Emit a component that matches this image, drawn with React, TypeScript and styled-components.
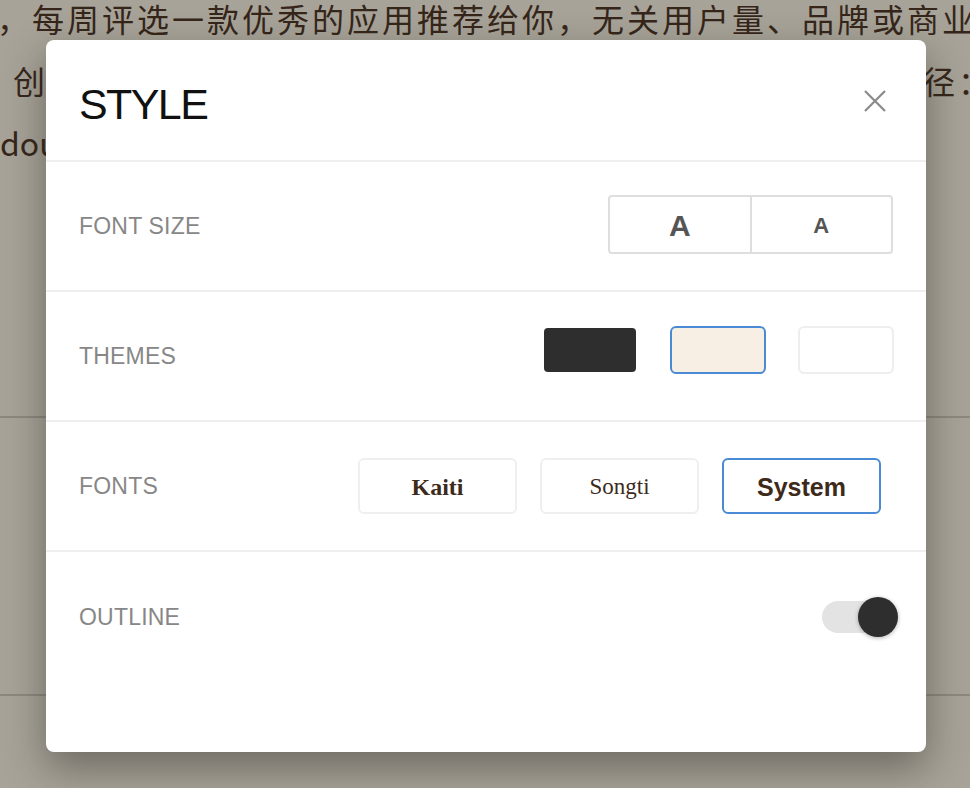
import React, { useState } from "react";
import styled, { createGlobalStyle } from "styled-components";

const GlobalStyle = createGlobalStyle`
    html, body {
        margin: 0;
        padding: 0;
    }
    body {
        font-family: "Liberation Sans", Arial, sans-serif;
    }
`;

const Page = styled.div`
    position: relative;
    height: 788px;
    overflow: hidden;
    background: #a7a398;
`;

const Article = styled.div`
    margin-top: -13px;
    font-family: "Noto Sans CJK SC", "Liberation Sans", sans-serif;
    font-size: 32px;
    letter-spacing: 3px;
    line-height: 62px;
    color: #36261a;
    white-space: nowrap;
`;

const Line = styled.div<{ $shift: number }>`
    margin-left: ${p => p.$shift}px;
`;

const Latin = styled.span`
    letter-spacing: 0;
`;

const Rule = styled.div<{ $gap: number }>`
    margin-top: ${p => p.$gap}px;
    height: 2px;
    background: #8d897f;
`;

const Dialog = styled.div`
    position: absolute;
    top: 40px;
    left: 46px;
    width: 880px;
    height: 712px;
    background: #fff;
    border-radius: 8px;
    box-shadow: 0 16px 40px rgba(40, 36, 30, 0.45);
    overflow: hidden;
`;

const Header = styled.div`
    height: 122px;
    box-sizing: border-box;
    padding: 8px 33px 0 33px;
    display: flex;
    align-items: center;
    justify-content: space-between;
    border-bottom: 2px solid #efefef;
`;

const Title = styled.h1`
    margin: 0;
    font-size: 43px;
    font-weight: 400;
    letter-spacing: -1.6px;
    color: #111;
`;

const Close = styled.button`
    border: 0;
    background: none;
    padding: 0;
    margin-right: 6px;
    margin-top: -6px;
    width: 24px;
    height: 24px;
    display: flex;
    cursor: pointer;
`;

const Row = styled.div<{ $padRight: number; $last?: boolean }>`
    height: 130px;
    box-sizing: border-box;
    padding: 0 ${p => p.$padRight}px 0 33px;
    display: flex;
    align-items: center;
    justify-content: space-between;
    border-bottom: ${p => (p.$last ? "none" : "2px solid #efefef")};
`;

const Label = styled.span`
    font-size: 23px;
    letter-spacing: 0.2px;
    color: #878787;
`;

const Segmented = styled.div`
    display: flex;
    width: 285px;
    height: 59px;
    box-sizing: border-box;
    border: 2px solid #dedede;
    border-radius: 4px;
    margin-top: -3px;
`;

const SegItem = styled.button<{ $size: number }>`
    flex: 1;
    border: 0;
    background: none;
    font-family: "Liberation Sans", Arial, sans-serif;
    font-weight: 700;
    font-size: ${p => p.$size}px;
    color: #555;
    padding-top: 3px;
    cursor: pointer;
    & + & {
        border-left: 2px solid #dedede;
    }
`;

const Swatches = styled.div`
    display: flex;
    gap: 32px;
    margin-bottom: 12px;
`;

const Swatch = styled.button<{ $bg: string; $border: string }>`
    width: 96px;
    height: 48px;
    box-sizing: border-box;
    border: 2px solid ${p => p.$border};
    border-radius: 6px;
    background: ${p => p.$bg};
    background-clip: padding-box;
    cursor: pointer;
`;

const FontChoices = styled.div`
    display: flex;
    gap: 23px;
`;

const FontButton = styled.button<{ $family: string; $weight: number; $size: number; $selected?: boolean }>`
    width: 159px;
    height: 56px;
    box-sizing: border-box;
    border: 2px solid ${p => (p.$selected ? "#4a8ad4" : "#efefef")};
    border-radius: 6px;
    background: #fff;
    font-family: ${p => p.$family};
    font-weight: ${p => p.$weight};
    font-size: ${p => p.$size}px;
    color: #3d2a1b;
    padding-top: 3px;
    cursor: pointer;
`;

const Toggle = styled.button`
    position: relative;
    width: 76px;
    height: 40px;
    border: 0;
    padding: 0;
    background: none;
    cursor: pointer;
`;

const Track = styled.span`
    position: absolute;
    left: 0;
    top: 4px;
    width: 60px;
    height: 32px;
    border-radius: 16px;
    background: #e3e3e3;
`;

const Knob = styled.span<{ $on: boolean }>`
    position: absolute;
    top: 0;
    left: ${p => (p.$on ? 36 : 0)}px;
    width: 40px;
    height: 40px;
    border-radius: 50%;
    background: #2e2e2e;
    box-shadow: 0 1px 4px rgba(0, 0, 0, 0.3);
`;

const themes = [
    { key: "dark", bg: "#2e2e2e", border: "transparent" },
    { key: "sepia", bg: "#f7efe4", border: "#4a8ad4" },
    { key: "light", bg: "#fff", border: "#eeeeee" },
];

const fonts = [
    { key: "Kaiti", family: '"Liberation Serif", serif', weight: 700, size: 24 },
    { key: "Songti", family: '"Liberation Serif", serif', weight: 400, size: 23 },
    { key: "System", family: '"Liberation Sans", Arial, sans-serif', weight: 700, size: 25 },
];

export default function App() {
    const [font, setFont] = useState("System");
    const [outline, setOutline] = useState(true);

    return (
        <Page>
            <GlobalStyle />
            <Article>
                <Line $shift={-3}>，每周评选一款优秀的应用推荐给你，无关用户量、品牌或商业</Line>
                <Line $shift={-22}>，创作者与开发者如有优秀作品希望被推荐，可以通过以下途径：</Line>
                <Line $shift={0}><Latin>doushu@sspai.com</Latin></Line>
            </Article>
            <Rule $gap={243} />
            <Rule $gap={276} />

            <Dialog>
                <Header>
                    <Title>STYLE</Title>
                    <Close aria-label="close">
                        <svg width="24" height="24" viewBox="0 0 24 24">
                            <path d="M2 2 L22 22 M22 2 L2 22" stroke="#8a8a8a" strokeWidth="2.2" fill="none" />
                        </svg>
                    </Close>
                </Header>

                <Row $padRight={33}>
                    <Label>FONT SIZE</Label>
                    <Segmented>
                        <SegItem $size={30}>A</SegItem>
                        <SegItem $size={22}>A</SegItem>
                    </Segmented>
                </Row>

                <Row $padRight={32}>
                    <Label>THEMES</Label>
                    <Swatches>
                        {themes.map(t => (
                            <Swatch key={t.key} $bg={t.bg} $border={t.border} />
                        ))}
                    </Swatches>
                </Row>

                <Row $padRight={45}>
                    <Label>FONTS</Label>
                    <FontChoices>
                        {fonts.map(f => (
                            <FontButton
                                key={f.key}
                                $family={f.family}
                                $weight={f.weight}
                                $size={f.size}
                                $selected={font === f.key}
                                onClick={() => setFont(f.key)}
                            >
                                {f.key}
                            </FontButton>
                        ))}
                    </FontChoices>
                </Row>

                <Row $padRight={28} $last>
                    <Label>OUTLINE</Label>
                    <Toggle onClick={() => setOutline(!outline)}>
                        <Track />
                        <Knob $on={outline} />
                    </Toggle>
                </Row>
            </Dialog>
        </Page>
    );
}
